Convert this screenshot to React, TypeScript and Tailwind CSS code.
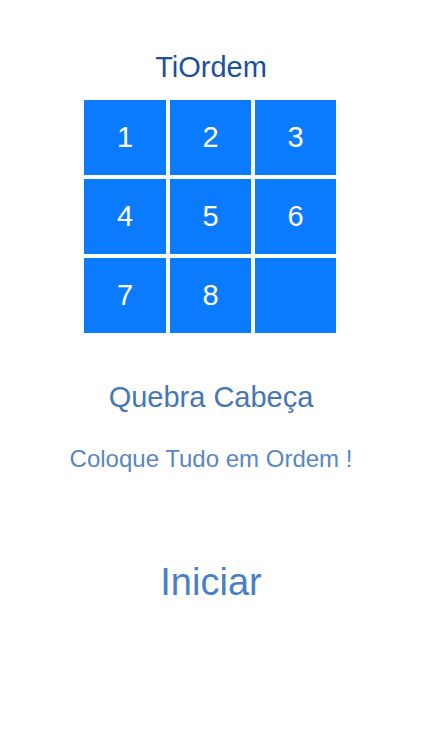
const tiles = ["1", "2", "3", "4", "5", "6", "7", "8", ""];

export default function App() {
  return (
    <div className="flex min-h-[750px] w-full flex-col items-center bg-white pt-[50px] font-['Liberation_Sans',Arial,sans-serif]">
      <h1 className="text-[29px] leading-[34px] text-[#1e4f9e]">TiOrdem</h1>

      <div className="mt-[16px] mr-[2px] grid grid-cols-[82px_81px_81px] grid-rows-[75px_75px_75px] gap-[4px]">
        {tiles.map((t, i) => (
          <div
            key={i}
            className="flex items-center justify-center bg-[#0a7bff] text-[29px] text-white"
          >
            {t}
          </div>
        ))}
      </div>

      <h2 className="mt-[47px] text-[29px] leading-[34px] text-[#4676b6]">Quebra Cabeça</h2>

      <p className="mt-[30px] text-[24px] leading-[30px] text-[#5a86c2]">Coloque Tudo em Ordem !</p>

      <button type="button" className="mt-[85px] text-[38px] leading-[46px] text-[#4a7fc6]">
        Iniciar
      </button>
    </div>
  );
}
